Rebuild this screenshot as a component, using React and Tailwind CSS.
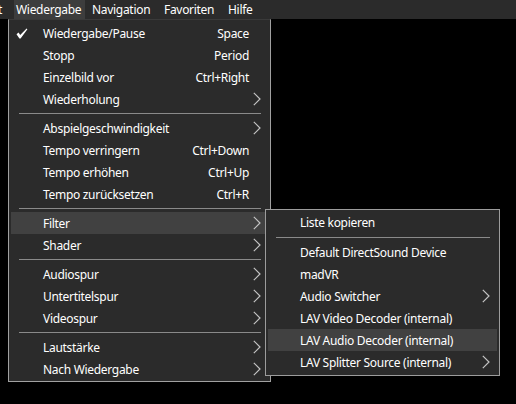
const font = { fontFamily: '"Noto Sans", "Open Sans", sans-serif' };

const mainItems = [
  { label: "Wiedergabe/Pause", shortcut: "Space", checked: true },
  { label: "Stopp", shortcut: "Period" },
  { label: "Einzelbild vor", shortcut: "Ctrl+Right" },
  { label: "Wiederholung", sub: true },
  "sep",
  { label: "Abspielgeschwindigkeit", sub: true },
  { label: "Tempo verringern", shortcut: "Ctrl+Down" },
  { label: "Tempo erhöhen", shortcut: "Ctrl+Up" },
  { label: "Tempo zurücksetzen", shortcut: "Ctrl+R" },
  "sep",
  { label: "Filter", sub: true, active: true },
  { label: "Shader", sub: true },
  "sep",
  { label: "Audiospur", sub: true },
  { label: "Untertitelspur", sub: true },
  { label: "Videospur", sub: true },
  "sep",
  { label: "Lautstärke", sub: true },
  { label: "Nach Wiedergabe", sub: true },
];

const filterItems = [
  { label: "Liste kopieren" },
  "sep8",
  { label: "Default DirectSound Device" },
  { label: "madVR" },
  { label: "Audio Switcher", sub: true },
  { label: "LAV Video Decoder (internal)" },
  { label: "LAV Audio Decoder (internal)", active: true },
  { label: "LAV Splitter Source (internal)", sub: true },
];

function Chevron() {
  return (
    <svg width="8" height="14" viewBox="0 0 8 14" className="absolute right-[7px] top-[4px]">
      <polyline points="0.8,0.8 7,7 0.8,13.2" fill="none" stroke="#c4c4c4" strokeWidth="1.2" />
    </svg>
  );
}

function Check() {
  return (
    <svg width="12" height="11" viewBox="0 0 12 11" className="absolute left-[5px] top-[6px]">
      <path d="M0.5 6.2 L2.6 4.6 L4.2 7 L10.6 0.4 L11.4 1.2 L4.6 10.4 L3.4 10.4 Z" fill="#ffffff" />
    </svg>
  );
}

function Row({ item }) {
  return (
    <div
      className={`relative mx-[2px] flex h-[22px] items-center pl-[32px] pt-[1px] text-[12px] tracking-[-0.3px] text-white ${
        item.active ? "bg-[#414141]" : ""
      }`}
    >
      {item.checked && <Check />}
      <span className="flex-1 whitespace-nowrap">{item.label}</span>
      {item.shortcut && <span className="mr-[19px] whitespace-nowrap">{item.shortcut}</span>}
      {item.sub && <Chevron />}
    </div>
  );
}

function Separator({ tall }) {
  return (
    <div className={`flex flex-col ${tall ? "h-[8px] pt-[4px]" : "h-[7px] pt-[3px]"}`}>
      <div className="ml-[10px] mr-[9px] h-px bg-[#8a8a8a]" />
    </div>
  );
}

export default function App() {
  return (
    <div className="relative h-[404px] w-[516px] overflow-hidden bg-black" style={font}>
      <div className="flex h-[19px] items-center bg-[#2b2b2b] text-[12px] tracking-[-0.3px] text-white">
        <div className="relative h-full w-[14px] overflow-hidden">
          <span className="absolute -left-[2px] top-[1px]">t</span>
        </div>
        <div className="flex h-full w-[71px] items-center bg-[#3d3d3d] pl-[2px]">Wiedergabe</div>
        <div className="w-[72px] pl-[7px]">Navigation</div>
        <div className="w-[64px] pl-[7px]">Favoriten</div>
        <div className="pl-[7px]">Hilfe</div>
      </div>

      <div className="ml-[8px] w-[263px] border border-t-[#3a3a3a] border-[#a0a0a0] bg-[#2b2b2b] pt-[2px] pb-[1px]">
        {mainItems.map((item, i) =>
          item === "sep" ? <Separator key={i} /> : <Row key={i} item={item} />
        )}
      </div>

      <div className="absolute left-[265px] top-[209px] w-[235px] border border-[#9c9c9c] bg-[#2b2b2b] pt-[1px] pb-[2px]">
        {filterItems.map((item, i) =>
          item === "sep8" ? <Separator key={i} tall /> : <Row key={i} item={item} />
        )}
      </div>
    </div>
  );
}
